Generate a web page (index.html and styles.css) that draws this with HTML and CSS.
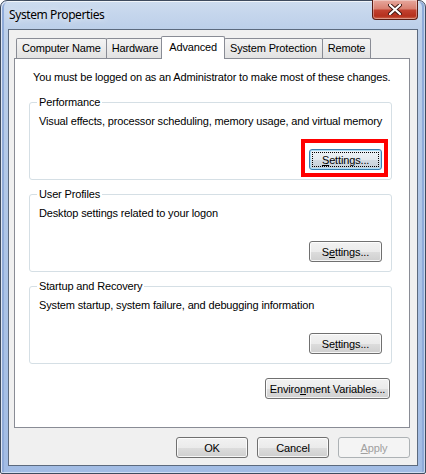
FILE: index.html
```html
<!DOCTYPE html>
<html lang="en">

<head>
    <meta charset="UTF-8">
    <title>System Properties</title>
    <link rel="stylesheet" href="styles.css">
</head>

<body>
    <div class="window">
        <div class="titlebar">
            <span class="title">System Properties</span>
            <div class="close">
                <svg width="14" height="11" viewBox="0 0 14 11">
                    <path d="M2 1 L12 10 M12 1 L2 10" stroke="#3b1510" stroke-width="4" stroke-linecap="round" />
                    <path d="M2 1 L12 10 M12 1 L2 10" stroke="#fff" stroke-width="2.2" stroke-linecap="round" />
                </svg>
            </div>
        </div>

        <div class="client">
            <div class="tabs">
                <div class="tab">Computer Name</div>
                <div class="tab">Hardware</div>
                <div class="tab current">Advanced</div>
                <div class="tab">System Protection</div>
                <div class="tab">Remote</div>
            </div>

            <div class="panel">
                <p class="note">You must be logged on as an Administrator to make most of these changes.</p>

                <fieldset class="group">
                    <legend>Performance</legend>
                    <p>Visual effects, processor scheduling, memory usage, and virtual memory</p>
                    <div class="group_btn">
                        <span class="highlight"><button class="btn focus"><u>S</u>ettings...</button></span>
                    </div>
                </fieldset>

                <fieldset class="group">
                    <legend>User Profiles</legend>
                    <p>Desktop settings related to your logon</p>
                    <div class="group_btn">
                        <button class="btn">S<u>e</u>ttings...</button>
                    </div>
                </fieldset>

                <fieldset class="group">
                    <legend>Startup and Recovery</legend>
                    <p>System startup, system failure, and debugging information</p>
                    <div class="group_btn">
                        <button class="btn">Se<u>t</u>tings...</button>
                    </div>
                </fieldset>

                <div class="env_row">
                    <button class="btn env">Enviro<u>n</u>ment Variables...</button>
                </div>
            </div>

            <div class="actions">
                <button class="btn">OK</button>
                <button class="btn">Cancel</button>
                <button class="btn disabled"><u>A</u>pply</button>
            </div>
        </div>
    </div>
</body>

</html>
```

FILE: styles.css
```css
* {
    margin: 0px;
    padding: 0px;
    box-sizing: border-box;
}

body {
    font-family: "Liberation Sans", Arial, sans-serif;
    font-size: 11px;
    letter-spacing: -0.15px;
    color: #000;
    background: #fff;
}

.window {
    display: flex;
    flex-direction: column;
    width: 426px;
    height: 474px;
    padding: 0 7px 7px 7px;
    border: 1px solid #3e4b5e;
    border-radius: 7px 7px 2px 2px;
    background: linear-gradient(to bottom, #cddcef 0px, #bccfe9 28px, #abc3e6 60%, #a2bce4 100%);
    box-shadow: inset 1px 1px 0 rgba(255, 255, 255, .7), inset -1px -1px 0 rgba(255, 255, 255, .5), inset 3px 0 0 #8fabd9, inset -3px 0 0 #8fabd9;
}

.titlebar {
    display: flex;
    height: 28px;
}

.title {
    font-family: "Noto Sans", "Liberation Sans", sans-serif;
    font-size: 12px;
    letter-spacing: -0.4px;
    line-height: 28px;
    padding-left: 1px;
    text-shadow: 0 0 6px rgba(255, 255, 255, .9);
}

.close {
    display: flex;
    align-items: center;
    justify-content: center;
    margin-left: auto;
    width: 46px;
    height: 20px;
    margin-top: -1px;
    border: 1px solid #5a1d14;
    border-top: none;
    border-radius: 0 0 4px 4px;
    background: linear-gradient(to bottom, #e7a89d 0%, #d98172 45%, #c1412f 55%, #b5301d 85%, #cf6a4f 100%);
    box-shadow: inset 0 0 0 1px rgba(255, 255, 255, .35);
}

.client {
    display: flex;
    flex-direction: column;
    flex: 1;
    padding: 0 7px 0 5px;
    border: 1px solid #5c6a7e;
    background-color: #f0f0f0;
}

.tabs {
    display: flex;
    align-items: flex-end;
    height: 22px;
    margin-top: 6px;
    padding-left: 2px;
}

.tab {
    position: relative;
    height: 20px;
    padding: 0 5px;
    margin-right: -1px;
    border: 1px solid #898c95;
    border-bottom: none;
    border-radius: 2px 2px 0 0;
    background: linear-gradient(to bottom, #f4f4f4, #e2e2e2);
    line-height: 19px;
    white-space: nowrap;
}

.tab.current {
    z-index: 2;
    height: 23px;
    margin: 0 -1px -1px -2px;
    padding: 0 7px;
    background: #fff;
    line-height: 21px;
}

.panel {
    display: flex;
    flex-direction: column;
    height: 370px;
    padding: 0 17px 0 14px;
    border: 1px solid #898c95;
    background-color: #fff;
}

.note {
    margin: 12px 0 0 4px;
    line-height: 13px;
    white-space: nowrap;
}

.group {
    margin-top: 8px;
    padding: 0 9px 9px 8px;
    border: 1px solid #d5dfe5;
    border-radius: 3px;
}

.note + .group {
    margin-top: 12px;
}

.group legend {
    margin-left: -1px;
    padding: 0 2px;
    line-height: 13px;
}

.group p {
    margin-top: 6px;
    line-height: 13px;
    padding-left: 1px;
    white-space: nowrap;
}

.group_btn {
    display: flex;
    justify-content: flex-end;
    margin-top: 21px;
}

.highlight {
    position: relative;
    display: flex;
}

.highlight::after {
    content: "";
    position: absolute;
    left: -8px;
    top: -10px;
    right: -6px;
    bottom: -7px;
    border: 4px solid #f00;
}

.btn {
    width: 73px;
    height: 21px;
    border: 1px solid #707070;
    border-radius: 3px;
    background: linear-gradient(to bottom, #f2f2f2 0%, #ebebeb 50%, #dddddd 51%, #cfcfcf 100%);
    box-shadow: inset 0 0 0 1px rgba(255, 255, 255, .8);
    font-family: inherit;
    font-size: 11px;
    letter-spacing: inherit;
    color: #000;
}

.btn u {
    text-underline-offset: 1px;
}

.btn.focus {
    border-color: #3c7fb1;
    background: linear-gradient(to bottom, #eef3f7 0%, #e4eaef 50%, #d4dce3 51%, #c6d0d9 100%);
    box-shadow: inset 0 0 0 1px #a9dcf6;
    outline: 1px dotted #000;
    outline-offset: -4px;
}

.btn.env {
    width: 125px;
}

.btn.disabled {
    border-color: #adb2b5;
    background: #f4f4f4;
    box-shadow: none;
    color: #a0a0a0;
}

.env_row {
    display: flex;
    justify-content: flex-end;
    margin-top: 14px;
    padding-right: 2px;
}

.actions {
    display: flex;
    justify-content: flex-end;
    gap: 9px;
    margin-top: 9px;
}

.actions .btn {
    width: 72px;
}
```
